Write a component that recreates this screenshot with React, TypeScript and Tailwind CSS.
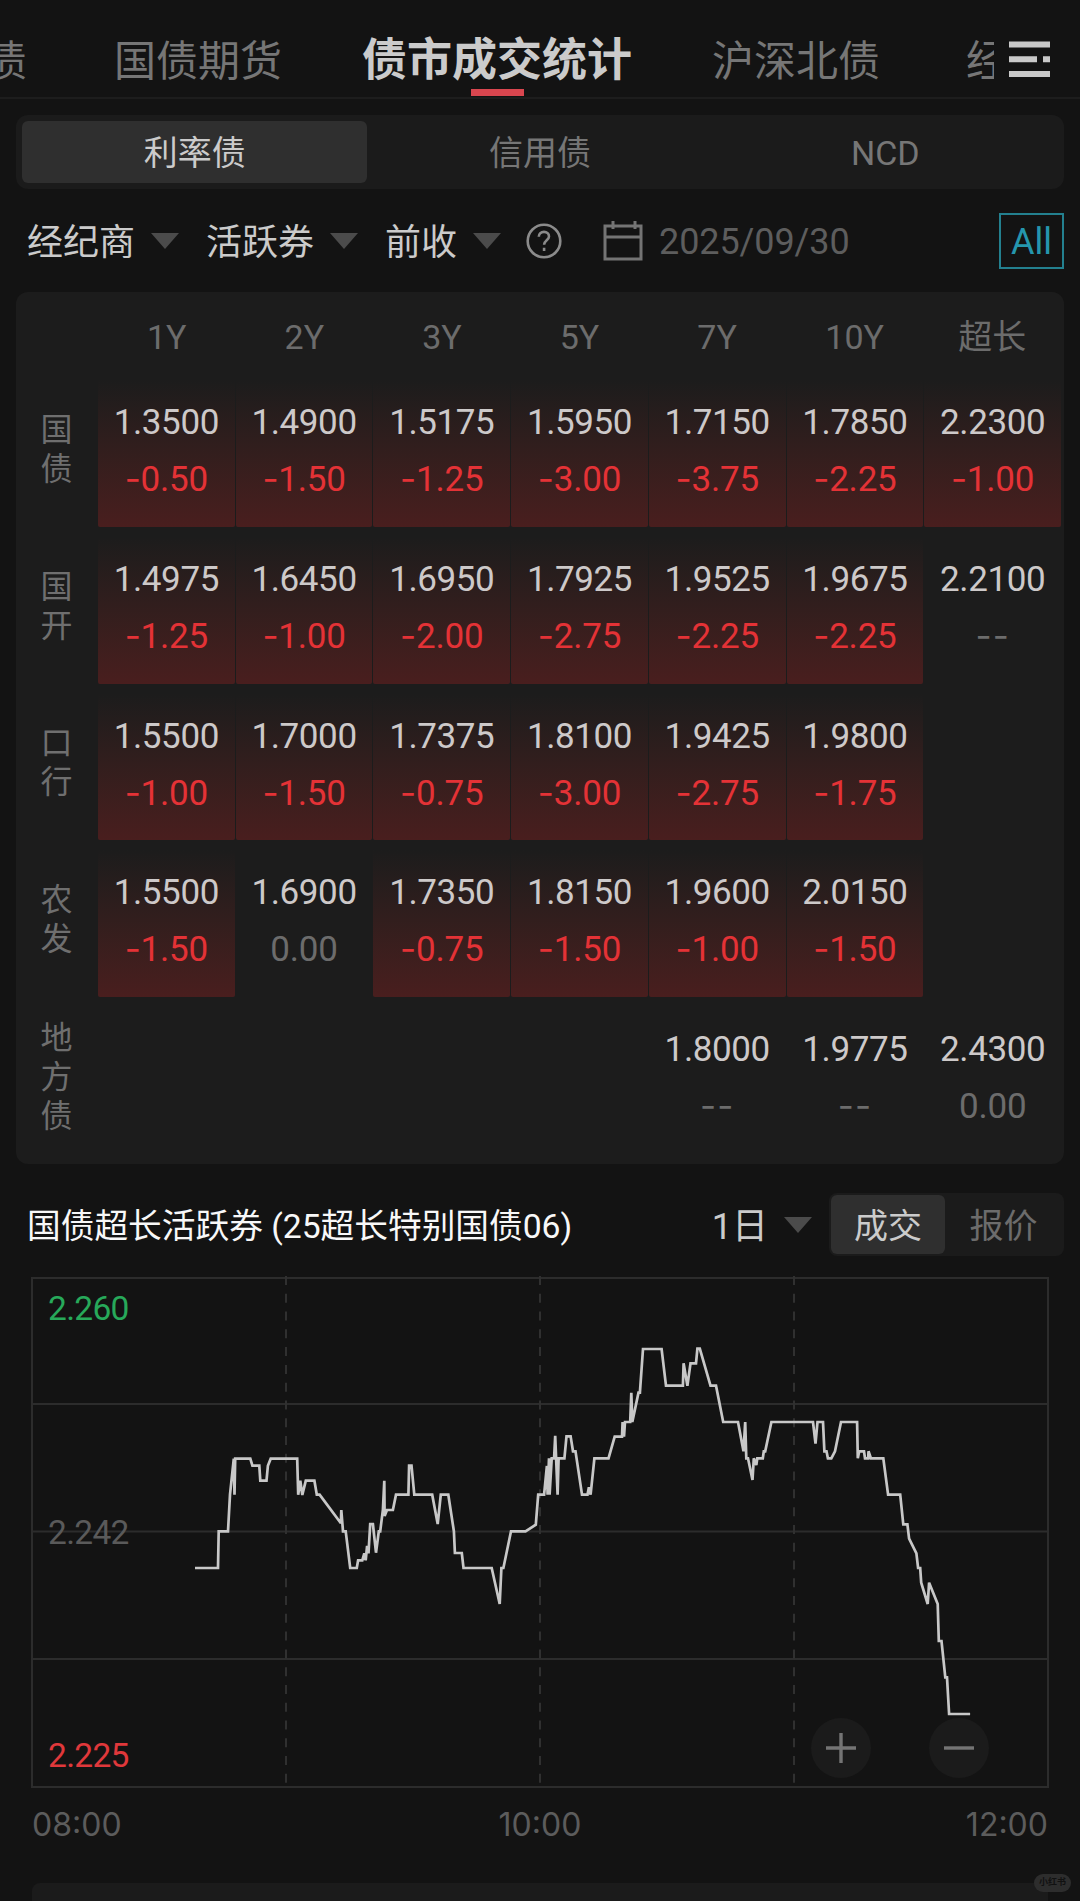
import clsx from "clsx";

type Quote = { price: string; change: string } | null;

const terms = ["1Y", "2Y", "3Y", "5Y", "7Y", "10Y", "超长"];

const q = (price: string, change: string): Quote => ({ price, change });

const bondRows: { name: string; quotes: Quote[] }[] = [
  {
    name: "国债",
    quotes: [
      q("1.3500", "-0.50"),
      q("1.4900", "-1.50"),
      q("1.5175", "-1.25"),
      q("1.5950", "-3.00"),
      q("1.7150", "-3.75"),
      q("1.7850", "-2.25"),
      q("2.2300", "-1.00"),
    ],
  },
  {
    name: "国开",
    quotes: [
      q("1.4975", "-1.25"),
      q("1.6450", "-1.00"),
      q("1.6950", "-2.00"),
      q("1.7925", "-2.75"),
      q("1.9525", "-2.25"),
      q("1.9675", "-2.25"),
      q("2.2100", "--"),
    ],
  },
  {
    name: "口行",
    quotes: [
      q("1.5500", "-1.00"),
      q("1.7000", "-1.50"),
      q("1.7375", "-0.75"),
      q("1.8100", "-3.00"),
      q("1.9425", "-2.75"),
      q("1.9800", "-1.75"),
      null,
    ],
  },
  {
    name: "农发",
    quotes: [
      q("1.5500", "-1.50"),
      q("1.6900", "0.00"),
      q("1.7350", "-0.75"),
      q("1.8150", "-1.50"),
      q("1.9600", "-1.00"),
      q("2.0150", "-1.50"),
      null,
    ],
  },
  {
    name: "地方债",
    quotes: [null, null, null, null, q("1.8000", "--"), q("1.9775", "--"), q("2.4300", "0.00")],
  },
];

// x,y pairs inside the 1016 x 509 plot area
const trend =
  "163,290 186,290 186.7,253.3 196,253.3 198,216.7 201.8,180.7 202.5,216.7 203.2,180.7 218.3,180.7 220.4,187.7 227.3,187.7 228.3,202.7 234.5,202.7 235.9,187.7 238.7,180.7 265.2,180.7 266.2,216.7 268.3,202.7 270.3,217 273.8,202.7 282.4,202.7 284.8,216.7 287.6,216.7 308.9,245.3 309.3,232 311,253.3 313.7,253.3 318.2,290 324.8,290 326.1,282.3 330.3,282.3 332.3,275.3 333.7,282.3 335.1,268 336.5,275.3 338.2,246 340.9,246 344,274.7 346.8,253.3 348.2,253.3 350.9,232 352.3,202.7 352.6,238 355,232 360.9,232 364,216.7 376.4,216.7 377.1,187.7 379.5,187.7 382.3,216.7 400.2,216.7 405.7,246 408.8,216.7 416.3,216.7 421.9,253.3 422.9,275 429.8,275 431.5,290 459.7,290 467.7,326 469.4,290 471.4,290 479,253.3 493.5,253.3 503.8,246.7 506.2,216.7 " +
  "512.1,216.7 514.9,188 515.6,216.7 517,180.3 517.6,216.7 519.7,180.3 522.1,180.3 523.2,157.7 525.6,216.7 526.6,180.3 532.4,180.3 534.5,158.3 538.6,158.3 541,173.3 543.5,173.3 550,216.7 555.5,216.7 556.9,209.3 558.6,216.7 562.4,180.3 576.5,180.3 582.7,158.7 590,158.7 590.6,144 592,158.7 593,144 598.2,144 599.3,114.7 600.3,144 606.5,114.7 607.9,114.7 611,71 629.6,71 634,107.7 650.9,107.7 651.6,85.3 655.4,107.7 658.5,85.3 664,85.3 665.4,70.7 667.8,70.7 678.5,107.7 684,107.7 691.2,144 706,144 711.5,173.3 713.2,144 714.3,180.3 716,180.3 720.5,202 721.8,180.3 724.3,187 725.3,180.3 730.8,180.3 731.8,173.3 733.2,173.3 739.4,144 781,144 783.5,165.7 785.5,144 791,144 792.4,173.3 794.5,173.3 795.9,180.3 799.3,180.3 803,173.3 809,144 825.1,144 825.8,180.3 827.2,173.3 832,173.3 833,180.3 836.2,180.3 836.5,173.3 838.9,180.3 851.3,180.3 856.1,216.7 868.2,216.7 871.3,246.3 875.4,246.3 877.1,260.7 884.4,275.3 886.1,290 888.2,290 889.2,304.7 895.7,326 897.1,304.7 905.7,326 906.8,363 909.5,363 913.3,399.3 915,399.3 917.1,436 938.1,436";

function Caret({ className }: { className?: string }) {
  return (
    <svg viewBox="0 0 28 16" className={clsx("h-4 w-7 shrink-0", className)} aria-hidden>
      <path d="M0 0h28L14 16z" fill="#4b4b4b" />
    </svg>
  );
}

function TopNav() {
  return (
    <header className="flex h-[99px] items-start border-b-2 border-[#1d1d1d] pt-[30px] text-[42px] leading-[63px] text-[#767676]">
      <div className="flex w-[994px] overflow-hidden whitespace-nowrap">
        <span className="-ml-[15px] w-[42px] shrink-0">债</span>
        <span className="ml-[87px] w-[168px] shrink-0">国债期货</span>
        <div className="ml-[80px] flex w-[270px] shrink-0 flex-col items-center">
          <span className="pt-[3px] text-[45px] leading-[56px] font-bold text-[#cbcbcb]">债市成交统计</span>
          <span className="h-[7px] w-[53px] bg-[#d9464f]" />
        </div>
        <span className="ml-[80px] w-[168px] shrink-0">沪深北债</span>
        <span className="ml-[86px] shrink-0">经济</span>
      </div>
      <svg viewBox="0 0 41 36" className="mt-[11px] ml-[15px] h-9 w-[41px]" fill="#c9c9c9" aria-hidden>
        <path d="M0 .5h41v6H0zM0 15.2h28v6H0zM34 15.2h7v6h-7zM0 30h41v6H0z" />
      </svg>
    </header>
  );
}

function CategoryTabs() {
  return (
    <div className="mx-4 mt-4 grid h-[74px] grid-cols-3 rounded-xl bg-[#1b1b1b] p-1.5 text-center text-[34px] leading-[65px] text-[#767676]">
      <div className="h-[62px] rounded-md bg-[#2f2f2f] text-[#cbcbcb]">利率债</div>
      <div>信用债</div>
      <div>NCD</div>
    </div>
  );
}

function Filters() {
  return (
    <div className="mt-[24px] flex h-[56px] items-center pr-4 pl-[27px] text-[36px] leading-none text-[#cbcbcb]">
      <span className="pt-[3px]">经纪商</span>
      <Caret className="ml-4" />
      <span className="ml-[27px] pt-[3px]">活跃券</span>
      <Caret className="ml-4" />
      <span className="ml-[27px] pt-[3px]">前收</span>
      <Caret className="ml-4" />
      <svg viewBox="0 0 36 36" className="ml-[25px] size-9" fill="none" stroke="#8b8b8b" strokeWidth="2.6" aria-hidden>
        <circle cx="18" cy="18" r="16.3" />
        <path d="M12.800 13.800c0-3 2.200-4.900 5.200-4.900s5 1.900 5 4.500c0 3.800-4.900 4-4.900 8.400M18.100 24.800v3.200" />
      </svg>
      <svg viewBox="0 0 40 40" className="ml-[41px] h-10 w-10" fill="none" stroke="#747474" strokeWidth="3" aria-hidden>
        <path d="M2 5h36v33H2zM2 16h36" />
        <path d="M10 0v8M32 0v8" />
      </svg>
      <span className="ml-4 pt-0.5 tracking-[-0.1px] text-[#5d5d5d]">2025/09/30</span>
      <span className="ml-auto flex h-[56px] w-[65px] items-center justify-center border-2 border-[#23808f] pt-px text-[#2596ad]">
        All
      </span>
    </div>
  );
}

function Change({ value }: { value: string }) {
  if (value === "--") {
    return <span className="mt-[21px] font-[Inter] tracking-[1px] text-[#6c6c6c]">--</span>;
  }
  if (value.startsWith("-")) {
    return (
      <span className="mt-[21px] tracking-[-0.2px] text-[#e43236]">
        <span className="font-[Inter]">-</span>
        {value.slice(1)}
      </span>
    );
  }
  return <span className="mt-[22px] tracking-[-0.2px] text-[#6c6c6c]">{value}</span>;
}

function QuoteCell({ quote }: { quote: Quote }) {
  if (!quote) return <div />;
  return (
    <div
      className={clsx(
        "mt-2.5 flex flex-col items-center pt-[25px] text-[35px] leading-[35px]",
        /^-\d/.test(quote.change) && "rounded-b-xs bg-linear-to-b from-[#1c1c1c] to-[#491e1e]",
      )}
    >
      <span className="tracking-[-0.4px] text-[#cdc9c9]">{quote.price}</span>
      <Change value={quote.change} />
    </div>
  );
}

function BondTable() {
  return (
    <section className="mx-4 mt-[23px] h-[872px] rounded-xl bg-[#1c1c1c] pr-[3px]">
      <div className="grid h-[78px] grid-cols-[82px_repeat(7,1fr)] pt-[23px] text-center text-[34px] leading-[44px] text-[#6c6c6c]">
        <span />
        {terms.map((term) => (
          <span key={term}>{term}</span>
        ))}
      </div>
      {bondRows.map((row) => (
        <div key={row.name} className="grid h-[156.8px] grid-cols-[81px_repeat(7,1fr)] gap-x-px">
          <div className="flex items-center justify-center pt-[3px]">
            <span className="w-8 text-[32px] leading-[39px] break-all text-[#6f6f6f]">{row.name}</span>
          </div>
          {row.quotes.map((quote, i) => (
            <QuoteCell key={terms[i]} quote={quote} />
          ))}
        </div>
      ))}
    </section>
  );
}

function ChartHeader() {
  return (
    <div className="mt-[29px] flex h-[63px] items-center pr-4 pl-[27px]">
      <h2 className="pt-[5px] text-[33.700px] leading-none whitespace-nowrap text-[#f8f8f8]">
        国债超长活跃券 (25超长特别国债06)
      </h2>
      <span className="ml-auto pt-1 text-[36px] leading-none text-[#cbcbcb]">1日</span>
      <Caret className="ml-4" />
      <div className="ml-[17px] flex h-[63px] w-[235px] rounded-lg bg-[#1b1b1b] p-0.5 text-center text-[34px] leading-[63px] text-[#6c6c6c]">
        <div className="h-[59px] w-[114px] rounded-md bg-[#2f2f2f] text-[#cbcbcb]">成交</div>
        <div className="flex-1">报价</div>
      </div>
    </div>
  );
}

function ZoomButton({ plus }: { plus?: boolean }) {
  return (
    <button className="flex size-[60px] items-center justify-center rounded-full bg-[#1b1b1b]">
      <svg viewBox="0 0 30 30" className="size-[30px]" stroke="#747474" strokeWidth="3.4" aria-hidden>
        <path d={plus ? "M0 15h30M15 0v30" : "M0 15h30"} />
      </svg>
    </button>
  );
}

function TrendChart() {
  return (
    <section className="mx-8 mt-[22px]">
      <div className="relative h-[509px]">
        <svg viewBox="0 0 1016 509" className="h-[509px] w-[1016px] overflow-visible" fill="none" aria-hidden>
          <g stroke="#2c2c2c" strokeWidth="2">
            <path d="M0 0h1016v509H0zM0 126h1016M0 253.500h1016M0 381h1016" />
            <path d="M254 -2v509M508 -2v509M762 -2v509" stroke="#303030" strokeDasharray="9 8.780" />
          </g>
          <polyline points={trend} stroke="#c8c8c8" strokeWidth="2.700" strokeLinejoin="miter" strokeMiterlimit="2" />
        </svg>
        <div className="absolute inset-y-0 left-4 flex flex-col justify-between py-3.5 text-[33.500px] leading-[34px] tracking-[-0.7px]">
          <span className="text-[#27a95a]">2.260</span>
          <span className="text-[#5a5a5a]">2.242</span>
          <span className="text-[#e0383b]">2.225</span>
        </div>
        <div className="absolute right-[59px] bottom-[9px] flex gap-[58px]">
          <ZoomButton plus />
          <ZoomButton />
        </div>
      </div>
      <div className="mt-[19px] grid grid-cols-3 font-[Inter] text-[32px] leading-[38px] text-[#5c5c5c]">
        <span>08:00</span>
        <span className="text-center">10:00</span>
        <span className="text-right">12:00</span>
      </div>
    </section>
  );
}

export default function App() {
  return (
    <main className="relative h-[1901px] w-[1080px] overflow-hidden bg-[#131313] font-[Roboto,'Noto_Sans_CJK_SC',sans-serif]">
      <TopNav />
      <CategoryTabs />
      <Filters />
      <BondTable />
      <ChartHeader />
      <TrendChart />
      <div className="mx-8 mt-[39px] h-10 rounded-t-lg bg-[#1b1b1b]" />
      <span className="absolute right-[9px] bottom-[9px] flex h-[18px] w-[37px] items-center justify-center rounded-full bg-[#2d2d2d] text-[9px] font-bold text-[#111]">
        小红书
      </span>
    </main>
  );
}
